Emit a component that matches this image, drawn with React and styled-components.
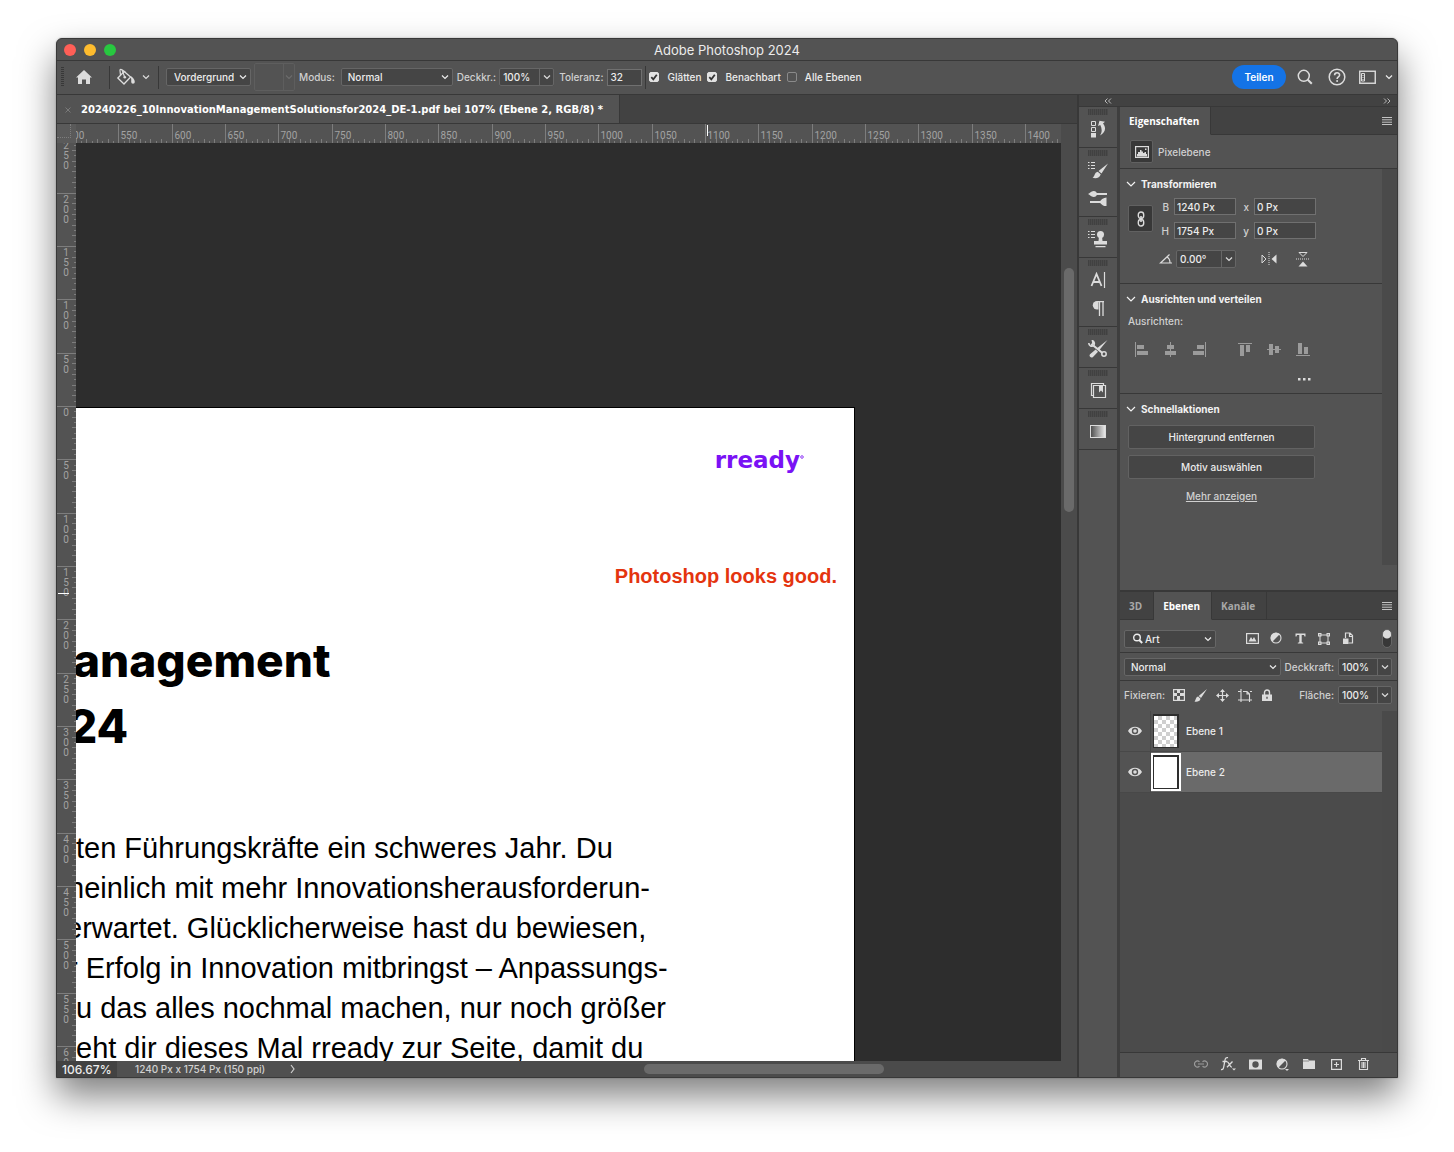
import React from "react";
import styled, { createGlobalStyle, css } from "styled-components";

const ui = `Inter, "Noto Sans", sans-serif`;
const tabFont = `"Open Sans", "Noto Sans", sans-serif`;

const colors = {
  panel: "#535353",
  dark: "#424242",
  field: "#454545",
  line: "#383838",
  edge: "#666666",
  text: "#ececec",
  label: "#d0d0d0",
  icon: "#dcdcdc",
};

const GlobalStyle = createGlobalStyle`
  * {
    box-sizing: border-box;
  }
  body {
    margin: 0;
    background: #ffffff;
  }
  button, input, select {
    font: inherit;
    color: inherit;
    margin: 0;
  }
`;

/* ---------- window ---------- */

const Desktop = styled.div`
  display: flex;
  height: 100vh;
  min-height: 900px;
  padding: 38px 56px 74px;
  font-family: ${ui};
  font-size: 10px;
  font-weight: 500;
  line-height: 16px;
  color: ${colors.text};
`;

const Window = styled.div`
  flex: 1;
  min-width: 0;
  display: flex;
  flex-direction: column;
  overflow: hidden;
  background: ${colors.panel};
  border: 1px solid ${colors.line};
  border-radius: 6px 6px 0 0;
  box-shadow: 0 18px 36px rgba(0, 0, 0, 0.5), 0 0 2px rgba(0, 0, 0, 0.3);
`;

const TitleBar = styled.header`
  display: grid;
  grid-template-columns: 1fr auto 1fr;
  align-items: center;
  height: 22px;
  flex: none;
  padding: 0 7px;
  border-bottom: 1px solid ${colors.line};
`;

const Lights = styled.div`
  display: flex;
  gap: 8px;
`;

const Light = styled.button`
  width: 12px;
  height: 12px;
  padding: 0;
  border: 0;
  border-radius: 50%;
  background: ${(p) => p.$color};
`;

const Title = styled.h1`
  margin: 0;
  font-size: 13px;
  font-weight: 400;
`;

const OptionsBar = styled.div`
  display: flex;
  align-items: center;
  flex: none;
  height: 34px;
  padding: 0 4px 1px;
  border-bottom: 1px solid ${colors.line};
  white-space: nowrap;
`;

const Group = styled.div`
  display: flex;
  align-items: center;
  gap: ${(p) => p.$gap ?? 6}px;
  margin-left: ${(p) => p.$left || 0}px;
`;

const BarGrip = styled.div`
  width: 3px;
  height: 20px;
  background: repeating-linear-gradient(${colors.line} 0 1px, transparent 1px 2px);
`;

const Divider = styled.div`
  width: 1px;
  height: 23px;
  background: ${colors.line};
  margin-left: ${(p) => p.$left || 0}px;
`;

const IconButton = styled.button`
  display: flex;
  align-items: center;
  justify-content: center;
  flex: none;
  padding: 0;
  border: 0;
  background: none;
  width: ${(p) => p.$w || 20}px;
  height: ${(p) => p.$h || 20}px;
  color: ${(p) => (p.$dim ? "#9b9b9b" : colors.icon)};
  svg {
    display: block;
  }
`;

const BoxedButton = styled(IconButton)`
  background: ${colors.line};
  border: 1px solid #616161;
  border-radius: 2px;
`;

const SelectBox = styled.div`
  display: grid;
  align-items: center;
  flex: ${(p) => (p.$w ? "none" : 1)};
  width: ${(p) => (p.$w ? p.$w + "px" : "auto")};
  height: 18px;
  background: ${colors.field};
  border: 1px solid ${colors.edge};
  border-radius: 2px;
  select,
  svg {
    grid-area: 1 / 1;
  }
  select {
    appearance: none;
    width: 100%;
    height: 16px;
    padding: 0 16px 0 ${(p) => p.$indent || 6}px;
    border: 0;
    background: none;
    outline: none;
  }
  svg {
    justify-self: end;
    margin-right: 3px;
    pointer-events: none;
  }
  svg.lead {
    justify-self: start;
    margin-left: 7px;
  }
`;

const EmptySwatch = styled.div`
  display: flex;
  align-items: center;
  justify-content: flex-end;
  width: 41px;
  height: 28px;
  margin: 0 4px 0 3px;
  padding-right: 1px;
  border: 1px solid #5e5e5e;
  border-radius: 2px;
  color: #6c6c6c;
  background: linear-gradient(#5e5e5e, #5e5e5e) 28px 0 / 1px 100% no-repeat;
`;

const Field = styled.input`
  width: ${(p) => p.$w}px;
  height: 17px;
  padding: 0 2px;
  background: ${colors.field};
  border: 1px solid #707070;
  border-radius: 0;
  outline: none;
`;

const Combo = styled.div`
  display: flex;
  flex: none;
  width: ${(p) => p.$w}px;
  height: 18px;
  background: ${colors.field};
  border: 1px solid ${colors.edge};
  border-radius: 2px;
  input {
    flex: 1;
    min-width: 0;
    padding: 0 3px;
    border: 0;
    background: none;
    outline: none;
  }
  button {
    display: flex;
    align-items: center;
    justify-content: center;
    width: 14px;
    padding: 0;
    border: 0;
    border-left: 1px solid ${colors.edge};
    background: none;
    color: ${colors.icon};
  }
`;

const Label = styled.label`
  color: ${colors.label};
  white-space: nowrap;
`;

const Check = styled.label`
  display: flex;
  align-items: center;
  gap: 8px;
  input {
    appearance: none;
    width: 10px;
    height: 10px;
    border: 1px solid #8a8a8a;
    border-radius: 2px;
  }
  span {
    display: grid;
  }
  input,
  svg {
    grid-area: 1 / 1;
  }
  input:checked {
    background: #e2e2e2;
    border-color: #e2e2e2;
  }
  svg {
    display: none;
    pointer-events: none;
    color: #333333;
  }
  input:checked + svg {
    display: block;
  }
`;

const Share = styled.button`
  width: 54px;
  height: 24px;
  margin-right: 7px;
  border: 0;
  border-radius: 12px;
  background: #1473e6;
  color: #ffffff;
  font-weight: 600;
`;

const Push = styled.div`
  flex: 1;
`;

/* ---------- document ---------- */

const Body = styled.div`
  flex: 1;
  min-height: 0;
  display: flex;
`;

const DocumentPane = styled.main`
  flex: 1;
  min-width: 0;
  display: flex;
  flex-direction: column;
`;

const DocTabs = styled.div`
  display: flex;
  flex: none;
  height: 29px;
  background: ${colors.dark};
  border-bottom: 1px solid ${colors.line};
`;

const DocTab = styled.div`
  display: flex;
  align-items: center;
  gap: 10px;
  padding: 1px 16px 0 8px;
  background: ${colors.panel};
  border-right: 1px solid ${colors.line};
  font-family: "DejaVu Sans", sans-serif;
  font-size: 10px;
  font-weight: 700;
  color: #ffffff;
  white-space: nowrap;
`;

const Workspace = styled.div`
  flex: 1;
  min-height: 0;
  display: grid;
  grid-template-columns: 19px minmax(0, 1fr) 16px;
  grid-template-rows: 19px minmax(0, 1fr) 16px;
`;

const Corner = styled.div`
  display: grid;
  grid-template-columns: 14px 1fr;
  grid-template-rows: 14px 1fr;
  background: #5a5a5a;
  div:first-child {
    border-right: 1px dotted #7d7d7d;
    border-bottom: 1px dotted #7d7d7d;
  }
`;

const RulerSvg = styled.svg`
  display: block;
  width: 100%;
  height: 100%;
  overflow: hidden;
  font-family: Roboto, sans-serif;
  font-size: 10px;
  font-weight: 400;
  fill: #a2a2a2;
`;

const Scroll = styled.div`
  display: flex;
  background: #4b4b4b;
  &::before,
  &::after {
    content: "";
    flex: ${(p) => p.$before};
  }
  &::after {
    flex: ${(p) => p.$after};
  }
  div {
    flex: ${(p) => p.$size};
    border-radius: 5px;
    background: #6a6a6a;
  }
`;

const ScrollY = styled(Scroll)`
  grid-row: 1 / 3;
  grid-column: 3;
  flex-direction: column;
  padding: 0 3px;
`;

const ScrollX = styled(Scroll)`
  flex: 1;
  padding: 3px 0;
`;

const Canvas = styled.div`
  min-height: 0;
  overflow: hidden;
  padding-top: 264px;
  background: #2d2d2d;
`;

const Page = styled.article`
  width: 779px;
  height: 1100px;
  padding-top: 40px;
  background: #ffffff;
  border: solid #000000;
  border-width: 1px 1px 0 0;
  font-family: "Liberation Sans", Arial, sans-serif;
  color: #000000;
`;

const Logo = styled.div`
  display: flex;
  justify-content: flex-end;
  align-items: flex-start;
  padding-right: 50px;
  font: 700 23px/24px "DejaVu Sans", sans-serif;
  color: #7a12f5;
  svg {
    margin-top: 7px;
  }
`;

const Remark = styled.p`
  margin: 92px 17px 0 0;
  text-align: right;
  font-size: 20px;
  font-weight: 700;
  line-height: 24px;
  color: #e4340f;
`;

const Heading = styled.h2`
  margin: 39px 0 69px;
  font-family: Inter, sans-serif;
  font-size: 46px;
  font-weight: 800;
  line-height: 66px;
`;

const HeadingLine = styled.div`
  margin-left: ${(p) => -p.$cut}px;
`;

const TextLine = styled.div`
  margin-left: ${(p) => -p.$cut}px;
  font-size: 29px;
  font-weight: 400;
  line-height: 40px;
  white-space: nowrap;
`;

const StatusBar = styled.footer`
  grid-column: 1 / 4;
  display: flex;
  background: ${colors.dark};
`;

const Zoom = styled.div`
  width: 60px;
  padding-left: 5px;
  font-size: 12px;
  line-height: 18px;
  white-space: nowrap;
`;

const DocInfo = styled.div`
  display: flex;
  align-items: center;
  justify-content: space-between;
  width: 183px;
  padding: 0 4px 0 18px;
  background: #505050;
  color: ${colors.label};
  white-space: nowrap;
`;

/* ---------- dock and panels ---------- */

const Side = styled.aside`
  flex: none;
  display: grid;
  grid-template-columns: 38px 277px;
  grid-template-rows: 12px minmax(0, 1fr);
  column-gap: 3px;
  border-left: 2px solid ${colors.line};
  background: #3e3e3e;
`;

const Collapse = styled.div`
  grid-column: 1 / 3;
  display: flex;
  align-items: center;
  justify-content: space-between;
  padding: 0 6px 0 25px;
  background: ${colors.dark};
  border-bottom: 1px solid ${colors.line};
  color: #b8b8b8;
`;

const Dock = styled.nav`
  background: ${colors.panel};
`;

const DockGroup = styled.div`
  display: flex;
  flex-direction: column;
  align-items: center;
  padding: 2px 0 4px;
  border-bottom: 1px solid ${colors.line};
`;

const DockGrip = styled.div`
  width: 20px;
  height: 6px;
  background: repeating-linear-gradient(90deg, #414141 0 1px, #4a4a4a 1px 2px);
`;

const Panels = styled.div`
  display: flex;
  flex-direction: column;
  min-height: 0;
  background: ${colors.panel};
`;

const TabRow = styled.div`
  display: flex;
  flex: none;
  height: 28px;
  background: ${colors.dark};
  font-family: ${tabFont};
  color: #ffffff;
`;

const Tab = styled.button`
  padding: 0 11px 0 9px;
  border: 0;
  border-right: 1px solid ${colors.line};
  border-bottom: 1px solid ${colors.line};
  background: none;
  font-weight: 700;
  color: #a8a8a8;
  ${(p) =>
    p.$active &&
    css`
      background: ${colors.panel};
      border-bottom-color: ${colors.panel};
      color: #ffffff;
    `}
`;

const TabRest = styled.div`
  flex: 1;
  display: flex;
  justify-content: flex-end;
  align-items: center;
  padding-right: 5px;
  border-bottom: 1px solid ${colors.line};
`;

const LayerKind = styled.div`
  display: flex;
  align-items: center;
  gap: 5px;
  height: 34px;
  padding-left: 10px;
  border-bottom: 1px solid ${colors.line};
  color: ${colors.label};
`;

const Properties = styled.section`
  flex: none;
  height: 423px;
  display: grid;
  grid-template-columns: minmax(0, 1fr) 15px;
  border-bottom: 2px solid ${colors.line};
`;

const Track = styled.div`
  margin-bottom: ${(p) => p.$end || 0}px;
  background: #4a4a4a;
`;

const Section = styled.section`
  padding: 7px 0 0 8px;
  height: ${(p) => p.$h}px;
  & + & {
    border-top: 1px solid ${colors.line};
  }
`;

const SectionTitle = styled.h3`
  display: flex;
  align-items: center;
  gap: 5px;
  margin: 0 0 6px -2px;
  font-size: 10px;
  font-weight: 700;
  line-height: 16px;
  color: #f2f2f2;
`;

const Geometry = styled.div`
  display: grid;
  grid-template-columns: 25px 21px 62px 18px 62px;
  grid-template-rows: 17px 17px;
  row-gap: 7px;
  align-items: center;
  label {
    text-align: right;
    padding-right: 5px;
  }
  > button {
    grid-row: 1 / 3;
  }
`;

const AngleRow = styled.div`
  display: flex;
  align-items: center;
  height: 18px;
  margin: 11px 0 0 28px;
`;

const AlignRow = styled.div`
  display: flex;
  gap: 9px;
  margin: 10px 0 0 4px;
  button:nth-child(4) {
    margin-left: 16px;
  }
`;

const More = styled.div`
  display: flex;
  justify-content: flex-end;
  margin: 10px 68px 0 0;
`;

const QuickActions = styled.div`
  display: flex;
  flex-direction: column;
  align-items: center;
  gap: 6px;
  width: 187px;
  padding-top: 2px;
  a {
    margin-top: 3px;
    color: ${colors.label};
  }
`;

const ActionButton = styled.button`
  width: 100%;
  height: 24px;
  padding: 0;
  background: ${colors.field};
  border: 1px solid #626262;
  border-radius: 2px;
`;

const Layers = styled.section`
  flex: 1;
  min-height: 0;
  display: flex;
  flex-direction: column;
`;

const LayerBar = styled.div`
  display: flex;
  align-items: center;
  flex: none;
  height: ${(p) => p.$h}px;
  padding: ${(p) => p.$top || 0}px 5px ${(p) => p.$bottom || 0}px 4px;
  gap: 4px;
  ${(p) =>
    p.$line &&
    css`
      border-bottom: 1px solid ${colors.line};
    `}
`;

const Toggle = styled.input`
  appearance: none;
  width: 10px;
  height: 19px;
  border: 1px solid #666666;
  border-radius: 5px;
  background: radial-gradient(circle at 50% 4px, #dcdcdc 4px, ${colors.line} 5px);
`;

const LayerArea = styled.div`
  flex: 1;
  min-height: 0;
  display: grid;
  grid-template-columns: minmax(0, 1fr) 15px;
  background: #4b4b4b;
`;

const LayerList = styled.ul`
  margin: 0;
  padding: 0;
  list-style: none;
`;

const LayerRow = styled.li`
  display: flex;
  align-items: center;
  height: 41px;
  background: ${colors.panel};
  border-bottom: 1px solid #484848;
`;

const LayerName = styled.div`
  flex: 1;
  display: flex;
  align-items: center;
  gap: 5px;
  height: 100%;
  border-left: 1px solid #484848;
  background: ${(p) => (p.$selected ? "#6a6a6a" : "none")};
`;

const Thumb = styled.div`
  padding: 2px;
  background: ${(p) => (p.$selected ? "#ffffff" : "none")};
  div {
    width: 26px;
    height: 34px;
    border: 2px solid #2e2e2e;
    border-width: 2px 2px 1px 1px;
    background: ${(p) =>
      p.$empty
        ? "repeating-conic-gradient(#cfcfcf 0 25%, #ffffff 0 50%) 0 0 / 8px 8px"
        : "#ffffff"};
  }
`;

const LayerFooter = styled.div`
  display: flex;
  justify-content: flex-end;
  gap: 7px;
  flex: none;
  height: 25px;
  padding: 1px 24px 0 0;
  border-top: 1px solid ${colors.line};
`;

/* ---------- icons ---------- */

const Svg = ({ w = 16, h = 16, children, ...rest }) => (
  <svg
    width={w}
    height={h}
    viewBox={`0 0 ${w} ${h}`}
    fill="none"
    stroke="currentColor"
    aria-hidden="true"
    {...rest}
  >
    {children}
  </svg>
);

const solid = { fill: "currentColor", stroke: "none" };

const Chevron = () => (
  <Svg w={8} h={6}>
    <path d="M1 1.5 4 4.5 7 1.5" strokeWidth="1.2" />
  </Svg>
);

const SectionChevron = () => (
  <Svg w={10} h={8}>
    <path d="M1 2 5 6 9 2" strokeWidth="1.2" />
  </Svg>
);

const MenuIcon = () => (
  <Svg w={10} h={8}>
    <path d="M0 .5h10M0 2.8h10M0 5.2h10M0 7.5h10" stroke="#c4c4c4" />
  </Svg>
);

const CheckMark = () => (
  <Svg w={10} h={10}>
    <path d="M2.3 5.2 4.3 7.3 7.8 2.7" strokeWidth="1.8" />
  </Svg>
);

const HomeIcon = () => (
  <Svg w={18} h={16}>
    <path {...solid} d="M9 1 1 8.4h2V15h4v-4.6h4V15h4V8.4h2Z" />
  </Svg>
);

const BucketIcon = () => (
  <Svg w={20} h={18}>
    <path d="M8.2 3.6 14.6 9 8 16 1.8 10Z" strokeWidth="1.3" />
    <path d="M8.7 9.2 6.2 2.4C5.6.8 3.8 1 4 2.6l.5 4.8M6 1.8l3.4 2.4" strokeWidth="1.2" />
    <circle cx="8.8" cy="9.2" r="1.3" {...solid} />
    <path {...solid} d="M14 8c2.500.7 4.800 3.400 4.800 6a1.800 1.800 0 0 1-3.600 0c0-1.500.3-2.800-.4-4.200Z" />
  </Svg>
);

const SearchIcon = () => (
  <Svg>
    <circle cx="6.800" cy="6.800" r="5.500" strokeWidth="1.500" />
    <path d="m10.800 10.800 4 4" strokeWidth="2" />
  </Svg>
);

const SmallSearch = () => (
  <Svg w={11} h={11} className="lead">
    <circle cx="5" cy="4.500" r="3.300" strokeWidth="1.400" />
    <path d="m7.200 7 3 3" strokeWidth="2" />
  </Svg>
);

const HelpIcon = () => (
  <Svg w={18} h={18}>
    <circle cx="9" cy="9" r="7.800" strokeWidth="1.500" />
    <path d="M6.600 7.200c0-3.200 5-3.200 5-.3 0 2-2.500 1.900-2.500 4" strokeWidth="1.600" />
    <circle cx="9.100" cy="13" r="1" {...solid} />
  </Svg>
);

const WorkspaceIcon = () => (
  <Svg w={17} h={14}>
    <rect x=".75" y="1.250" width="15.500" height="12" strokeWidth="1.400" />
    <path d="M2.500 3.500h3v7.500h-3z" />
    <path d="M3.500 5.500h1M3.500 7.500h1M3.500 9.500h1" />
  </Svg>
);

const HistoryIcon = () => (
  <Svg w={16} h={18}>
    <path d="M1.500 1.500h4v4h-4zM1.500 7.500h4v4h-4z" />
    <path {...solid} d="M1 13h5v4.500H1ZM8 6 9.500.8l5.500 1-2 1.700c3.500 4 2.500 9-3 12C12 12.500 12.300 9 10.300 5Z" />
  </Svg>
);

const ListMark = () => (
  <path d="M0 1.500h1.500M3 1.500h4M0 4.500h1.500M3 4.500h4M0 7.500h1.500M3 7.500h4" strokeWidth="1.200" />
);

const BrushesIcon = () => (
  <Svg w={20} h={18}>
    <ListMark />
    <path {...solid} d="M20 2.500 13.500 12.500 10.500 10ZM9.700 10.700l3 2.500c-.7 3.500-4.700 4.800-8.200 3.500 2.200-.8 1.700-5.300 5.200-6Z" />
  </Svg>
);

const BrushSettingsIcon = () => (
  <Svg w={20} h={16}>
    <path d="M8 4h11M2 12h11" strokeWidth="2" />
    <path {...solid} d="M0 4c2-.5 3-3 5.500-3C8 1 9 2.500 9 4S8 7 5.500 7 2 4.500 0 4ZM11.500 12c2-3 4-4 7-4.500v9c-3-.5-5-1.500-7-4.500Z" />
  </Svg>
);

const StampIcon = () => (
  <Svg w={20} h={18}>
    <ListMark />
    <circle cx="12.500" cy="4.500" r="3.500" {...solid} />
    <path {...solid} d="M11 6h3l.5 5H19v3.500H6V11h4.500ZM7.500 16h10v1.300h-10Z" />
  </Svg>
);

const CharacterIcon = () => (
  <Svg>
    <path d="M1.500 14 6.500 2l5 12M3.200 10h6.600" strokeWidth="1.800" />
    <path d="M14.500 0v16" strokeWidth="1.200" />
  </Svg>
);

const ParagraphIcon = () => (
  <Svg w={14} h={16}>
    <path {...solid} d="M7.500 1H6a4.200 4.200 0 0 0 0 8.400h1.500Z" />
    <path d="M8.500 1v15M12 1v15M7 1.600h6" strokeWidth="1.300" />
  </Svg>
);

const ToolsIcon = () => (
  <Svg w={20} h={18}>
    <path d="M4 4.500 14.500 13" strokeWidth="2" />
    <circle cx="16" cy="14" r="2.200" strokeWidth="1.500" />
    <path d="M.8 3c0 3 3 4 5 2.300 1-1.600.5-4-1.300-4.500L5 3.300 3.200 5" strokeWidth="1.600" />
    <path {...solid} d="M19.500 0 11 10.500 8.700 8.500ZM7.700 9.500 10 11.700 5 17c-2 1.500-4.500-.5-3-2.800Z" />
  </Svg>
);

const LibraryIcon = () => (
  <Svg w={17} h={17}>
    <path d="M3.500 13.500h-2v-12h12v2M3.500 3.500h12v12h-12z" strokeWidth="1.200" />
    <path {...solid} d="M9 4h4v6.500l-2-2-2 2Z" />
  </Svg>
);

const GradientIcon = () => (
  <Svg w={16} h={13}>
    <defs>
      <linearGradient id="swatch">
        <stop offset="0" stopColor="#4a4a4a" />
        <stop offset="1" stopColor="#eeeeee" />
      </linearGradient>
    </defs>
    <rect x=".5" y=".5" width="15" height="12" fill="url(#swatch)" />
  </Svg>
);

const PixelIcon = () => (
  <Svg w={14} h={12}>
    <rect x=".6" y=".6" width="12.800" height="10.800" strokeWidth="1.200" />
    <path {...solid} d="M2 10.500V8h1V6h2V4h1.500v1.500H8V7h1.500V6H11v2h1v2.500ZM10 2.500h1.500V4H10Z" />
  </Svg>
);

const LinkIcon = () => (
  <Svg w={10} h={16}>
    <rect x="2.300" y="1" width="5.400" height="6.500" rx="2.700" strokeWidth="1.400" />
    <rect x="2.300" y="8.500" width="5.400" height="6.500" rx="2.700" strokeWidth="1.400" />
    <path d="M5 5v6" strokeWidth="1.600" />
  </Svg>
);

const AngleIcon = () => (
  <Svg w={14} h={10}>
    <path d="M10.500.5 1.500 9H13M8 3c1.800 1 3 3.500 3 6" strokeWidth="1.200" />
  </Svg>
);

const FlipHIcon = () => (
  <Svg w={16} h={14}>
    <path d="M1 3v8l4-4Z" />
    <path d="M8 0v14" strokeDasharray="1 1" />
    <path {...solid} d="M15.500 2.500v9L10.500 7Z" />
  </Svg>
);

const FlipVIcon = () => (
  <Svg w={14} h={16}>
    <path d="M3 1.500h8L7 5.500Z" />
    <path d="M0 8h14" strokeDasharray="1 1" />
    <path {...solid} d="M2.500 15.500h9L7 10.500Z" />
  </Svg>
);

// bars of the six align buttons: guide line first, then the two blocks
const alignIcons = [
  ["Linke Kanten", "M1 1h1v15H1ZM3 4h7v4H3ZM3 10h11v4H3Z"],
  ["Horizontal zentrieren", "M7 1h1v15H7ZM4 4h7v4H4ZM2 10h11v4H2Z"],
  ["Rechte Kanten", "M13 1h1v15h-1ZM5 4h7v4H5ZM1 10h11v4H1Z"],
  ["Obere Kanten", "M1 2h14v1H1ZM3 4h4v11H3ZM9 4h4v7H9Z"],
  ["Vertikal zentrieren", "M1 8h14v1H1ZM3 3h4v11H3ZM9 5h4v7H9Z"],
  ["Untere Kanten", "M1 14h14v1H1ZM3 2h4v11H3ZM9 6h4v7H9Z"],
];

const PictureIcon = () => (
  <Svg w={13} h={11}>
    <rect x=".6" y=".6" width="11.800" height="9.800" strokeWidth="1.200" />
    <path {...solid} d="M2.500 8.500 5 4l1.500 2.500L8 4l2.500 4.500Z" />
  </Svg>
);

const AdjustIcon = ({ menu }) => (
  <Svg w={13} h={13}>
    <circle cx="6" cy="6" r="5" strokeWidth="1.100" />
    <path {...solid} d="M9.700 2.300A5.200 5.200 0 1 0 2.300 9.700Z" />
    {menu && <path {...solid} d="M9 11h4l-2 2Z" />}
  </Svg>
);

const TypeIcon = () => (
  <Svg w={11} h={11}>
    <path {...solid} d="M.5.500h10v3h-1L9 2H6.700v7.300l1.500.4v.8H2.800v-.8l1.500-.4V2H2l-.5 1.500h-1Z" />
  </Svg>
);

const ShapeIcon = () => (
  <Svg w={12} h={12}>
    <path d="M3 2h6M3 10h6M2 3v6M10 3v6" />
    <path {...solid} d="M0 0h3.500v3.500H0ZM8.500 0H12v3.500H8.500ZM0 8.500h3.500V12H0ZM8.500 8.500H12V12H8.500Z" />
    <path d="M1.200 1.800h1.200M9.600 1.800h1.200M1.200 10.200h1.200M9.600 10.200h1.200" stroke="#535353" />
  </Svg>
);

const SmartIcon = () => (
  <Svg w={12} h={13}>
    <path d="M3.500 6V1h4.500l2.500 2.500V11H6.500M7.500 1v3.500h3" strokeWidth="1.200" />
    <path {...solid} d="M1 6.500h5.500V12H1Z" />
  </Svg>
);

const CheckerIcon = () => (
  <Svg w={12} h={12}>
    <rect x=".6" y=".6" width="10.800" height="10.800" strokeWidth="1.200" />
    <path {...solid} d="M4 1h3v3H4ZM1 4h3v3H1ZM7 4h4v3H7ZM4 7h3v4H4Z" />
  </Svg>
);

const BrushIcon = () => (
  <Svg w={13} h={13}>
    <path {...solid} d="M13 0 7 9 4.700 7ZM4.200 7.500 6.500 9.700C6 12.500 3 13 .5 12.500c1.500-1 1-4.500 3.700-5Z" />
  </Svg>
);

const MoveIcon = () => (
  <Svg w={13} h={13}>
    <path d="M6.500 1v11M1 6.500h11" strokeWidth="1.200" />
    <path {...solid} d="M6.500 0 9 3H4ZM6.500 13 9 10H4ZM0 6.500 3 4v5ZM13 6.500 10 4v5Z" />
  </Svg>
);

const ArtboardIcon = () => (
  <Svg w={14} h={13}>
    <path d="M3 0v13M0 2.500h3M5 2.500h4L11.500 5v8M0 11h14M12 2.500h2M9 2.500V5h2.500" strokeWidth="1.100" />
  </Svg>
);

const LockIcon = () => (
  <Svg w={10} h={12}>
    <path d="M2.500 6V3.500a2.500 2.500 0 0 1 5 0V6" strokeWidth="1.400" />
    <path {...solid} fillRule="evenodd" d="M0 5.500h10V12H0ZM4.300 7.800v2h1.400v-2Z" />
  </Svg>
);

const EyeIcon = () => (
  <Svg w={14} h={10}>
    <path {...solid} fillRule="evenodd" d="M0 5c3-5.600 11-5.600 14 0-3 5.600-11 5.600-14 0Zm7-3.200a3.200 3.200 0 1 0 0 6.400 3.200 3.200 0 0 0 0-6.400Z" />
    <circle cx="7" cy="5" r="1.800" {...solid} />
  </Svg>
);

const ChainIcon = () => (
  <Svg w={14} h={8}>
    <path d="M5.500 6.300A3 3 0 1 1 5.500 1.700M8.500 1.700a3 3 0 1 1 0 4.600M4 4h6" strokeWidth="1.200" />
  </Svg>
);

const FxIcon = () => (
  <Svg w={16} h={16}>
    <path d="M1 13.500c2 .5 2.500-1 3-4l1-5.500c.4-2 1.200-2.800 3-2.300M2.500 5.500h4.500M7 6c2-.8 2.500 5.500 4.800 5M12.500 5.500 7 11.300" strokeWidth="1.300" />
    <path {...solid} d="M12 12.500h4l-2 2Z" />
  </Svg>
);

const MaskIcon = () => (
  <Svg w={13} h={11}>
    <path {...solid} fillRule="evenodd" d="M0 .5h13v10H0ZM6.500 2.300a3.200 3.200 0 1 0 0 6.400 3.200 3.200 0 0 0 0-6.400Z" />
  </Svg>
);

const FolderIcon = () => (
  <Svg w={12} h={10}>
    <path {...solid} d="M0 0h5l1 1.500h6V10H0Z" />
    <path d="M0 2h6" stroke="#777777" strokeWidth=".8" />
  </Svg>
);

const NewIcon = () => (
  <Svg w={11} h={11}>
    <path d="M.6.600h9.800v9.800H.6ZM5.500 3v5M3 5.500h5" strokeWidth="1.200" />
  </Svg>
);

const TrashIcon = () => (
  <Svg w={11} h={12}>
    <path d="M0 2.500h11M3.500 2.500v-2h4v2M1.500 2.500v9h8v-9M4 4v6M5.500 4v6M7 4v6" strokeWidth="1.100" />
  </Svg>
);

/* ---------- rulers ---------- */

const SCALE = 16 / 15;

const range = (from, to, step) => {
  const out = [];
  for (let v = from; v <= to; v += step) out.push(v);
  return out;
};

function TopRuler() {
  const x = (v) => Math.round((v - 500) * SCALE - 11) + 0.5;
  return (
    <RulerSvg>
      {range(500, 1450, 5).map((v) => {
        const len = v % 50 === 0 ? 19 : v % 10 === 0 ? 4 : 2;
        return <path key={v} d={`M${x(v)} 19v-${len}`} stroke="#7d7d7d" />;
      })}
      {range(500, 1400, 50).map((v) => (
        <text key={v} x={x(v) + 2} y="15">
          {v}
        </text>
      ))}
      <path d="M631.500 1v11" stroke="#ffffff" />
    </RulerSvg>
  );
}

function SideRuler() {
  const y = (v) => Math.round(v * SCALE + 263) + 0.5;
  return (
    <RulerSvg>
      {range(-250, 650, 5).map((v) => {
        const len = v % 50 === 0 ? 19 : v % 10 === 0 ? 4 : 2;
        return <path key={v} d={`M19 ${y(v)}h-${len}`} stroke="#7d7d7d" />;
      })}
      {range(-250, 600, 50).map((v) =>
        String(Math.abs(v))
          .split("")
          .map((digit, i) => (
            <text key={v + "-" + i} x="9" y={y(v) + 9 + i * 10} textAnchor="middle">
              {digit}
            </text>
          ))
      )}
      <path d="M1 450.500h11" stroke="#ffffff" />
    </RulerSvg>
  );
}

/* ---------- shared controls ---------- */

const Select = ({ label, value, lead, ...rest }) => (
  <SelectBox {...rest}>
    {lead}
    <select aria-label={label} defaultValue={value}>
      <option>{value}</option>
    </select>
    <Chevron />
  </SelectBox>
);

const ComboField = ({ id, label, value, width }) => (
  <Combo $w={width}>
    <input id={id} aria-label={label} defaultValue={value} />
    <button aria-label={`${label} wählen`}>
      <Chevron />
    </button>
  </Combo>
);

const CheckOption = ({ label, checked }) => (
  <Check>
    <span>
      <input type="checkbox" defaultChecked={checked} />
      <CheckMark />
    </span>
    {label}
  </Check>
);

const dockGroups = [
  [["Protokoll", HistoryIcon]],
  [
    ["Pinsel", BrushesIcon],
    ["Pinseleinstellungen", BrushSettingsIcon],
  ],
  [["Kopierquelle", StampIcon]],
  [
    ["Zeichen", CharacterIcon],
    ["Absatz", ParagraphIcon],
  ],
  [["Werkzeugvorgaben", ToolsIcon]],
  [["Bibliotheken", LibraryIcon]],
  [["Verläufe", GradientIcon]],
];

// cut: how far the line runs out past the left edge of the view
const headingLines = [
  { text: "anagement", cut: 3 },
  { text: "24", cut: 8 },
];

const textLines = [
  { text: "ten Führungskräfte ein schweres Jahr. Du", cut: 0 },
  { text: "heinlich mit mehr Innovationsherausforderun-", cut: 8 },
  { text: "erwartet. Glücklicherweise hast du bewiesen,", cut: 10 },
  { text: "r Erfolg in Innovation mitbringst – Anpassungs-", cut: 8 },
  { text: "u das alles nochmal machen, nur noch größer", cut: 0 },
  { text: "eht dir dieses Mal rready zur Seite, damit du", cut: 0 },
];

function Options() {
  return (
    <OptionsBar>
      <BarGrip />
      <IconButton $w={40} aria-label="Startseite">
        <HomeIcon />
      </IconButton>
      <Divider $left={5} />
      <Group $left={6} $gap={4}>
        <IconButton aria-label="Füllwerkzeug">
          <BucketIcon />
        </IconButton>
        <IconButton $w={12} aria-label="Werkzeugvorgabe wählen">
          <Chevron />
        </IconButton>
      </Group>
      <Divider $left={6} />
      <Group $left={7} $gap={0}>
        <Select label="Füllquelle" value="Vordergrund" $w={85} $indent={7} />
        <EmptySwatch>
          <Chevron />
        </EmptySwatch>
      </Group>
      <Group>
        <Label>Modus:</Label>
        <Select label="Modus" value="Normal" $w={112} />
      </Group>
      <Group $left={4} $gap={3}>
        <Label htmlFor="opacity">Deckkr.:</Label>
        <ComboField id="opacity" label="Deckkraft" value="100%" width={55} />
      </Group>
      <Group $left={5} $gap={4}>
        <Label htmlFor="tolerance">Toleranz:</Label>
        <Field id="tolerance" defaultValue="32" $w={35} />
      </Group>
      <Divider $left={3} />
      <Group $left={3}>
        <CheckOption label="Glätten" checked />
        <CheckOption label="Benachbart" checked />
        <CheckOption label="Alle Ebenen" />
      </Group>
      <Push />
      <Share>Teilen</Share>
      <Group $gap={8}>
        <IconButton $w={24} aria-label="Suchen">
          <SearchIcon />
        </IconButton>
        <IconButton $w={24} aria-label="Hilfe">
          <HelpIcon />
        </IconButton>
        <IconButton aria-label="Arbeitsbereich">
          <WorkspaceIcon />
        </IconButton>
        <Chevron />
      </Group>
    </OptionsBar>
  );
}

function DocumentView() {
  return (
    <DocumentPane>
      <DocTabs>
        <DocTab>
          <Svg w={6} h={6}>
            <path d="m.5.500 5 5m0-5-5 5" stroke="#7a7a7a" />
          </Svg>
          20240226_10InnovationManagementSolutionsfor2024_DE-1.pdf bei 107% (Ebene 2, RGB/8) *
        </DocTab>
      </DocTabs>
      <Workspace>
        <Corner>
          <div />
        </Corner>
        <TopRuler />
        <ScrollY $before={144} $size={244} $after={549}>
          <div />
        </ScrollY>
        <SideRuler />
        <Canvas>
          <Page>
            <Logo>
              rready
              <Svg w={4} h={4}>
                <circle cx="2" cy="2" r="1.300" strokeWidth=".8" />
              </Svg>
            </Logo>
            <Remark>Photoshop looks good.</Remark>
            <Heading>
              {headingLines.map((line) => (
                <HeadingLine key={line.text} $cut={line.cut}>
                  {line.text}
                </HeadingLine>
              ))}
            </Heading>
            {textLines.map((line) => (
              <TextLine key={line.text} $cut={line.cut}>
                {line.text}
              </TextLine>
            ))}
          </Page>
        </Canvas>
        <StatusBar>
          <Zoom>106.67%</Zoom>
          <DocInfo>
            1240 Px x 1754 Px (150 ppi)
            <Svg w={6} h={10}>
              <path d="m1 1 3 4-3 4" strokeWidth="1.200" />
            </Svg>
          </DocInfo>
          <ScrollX $before={344} $size={240} $after={193}>
            <div />
          </ScrollX>
        </StatusBar>
      </Workspace>
    </DocumentPane>
  );
}

function PropertiesPanel() {
  return (
    <>
      <TabRow>
        <Tab $active>Eigenschaften</Tab>
        <TabRest>
          <MenuIcon />
        </TabRest>
      </TabRow>
      <LayerKind>
        <BoxedButton as="span" $w={23} $h={23}>
          <PixelIcon />
        </BoxedButton>
        Pixelebene
      </LayerKind>
      <Properties>
        <div>
          <Section $h={114}>
            <SectionTitle>
              <SectionChevron />
              Transformieren
            </SectionTitle>
            <Geometry>
              <BoxedButton $w={25} $h={27} aria-label="Verknüpfen">
                <LinkIcon />
              </BoxedButton>
              <Label htmlFor="w">B</Label>
              <Field id="w" defaultValue="1240 Px" $w={62} />
              <Label htmlFor="x">x</Label>
              <Field id="x" defaultValue="0 Px" $w={62} />
              <Label htmlFor="h">H</Label>
              <Field id="h" defaultValue="1754 Px" $w={62} />
              <Label htmlFor="y">y</Label>
              <Field id="y" defaultValue="0 Px" $w={62} />
            </Geometry>
            <AngleRow>
              <IconButton aria-label="Winkel">
                <AngleIcon />
              </IconButton>
              <ComboField label="Drehwinkel" value="0.00°" width={60} />
              <Group $left={23} $gap={14}>
                <IconButton aria-label="Horizontal spiegeln">
                  <FlipHIcon />
                </IconButton>
                <IconButton aria-label="Vertikal spiegeln">
                  <FlipVIcon />
                </IconButton>
              </Group>
            </AngleRow>
          </Section>
          <Section $h={110}>
            <SectionTitle>
              <SectionChevron />
              Ausrichten und verteilen
            </SectionTitle>
            <Label as="div">Ausrichten:</Label>
            <AlignRow>
              {alignIcons.map(([name, d]) => (
                <IconButton key={name} $dim aria-label={name}>
                  <Svg>
                    <path {...solid} d={d} />
                  </Svg>
                </IconButton>
              ))}
            </AlignRow>
            <More>
              <IconButton aria-label="Weitere Optionen">
                <Svg w={14} h={4}>
                  <path {...solid} d="M1 1h2.500v2.500H1ZM6 1h2.500v2.500H6ZM11 1h2.500v2.500H11Z" />
                </Svg>
              </IconButton>
            </More>
          </Section>
          <Section>
            <SectionTitle>
              <SectionChevron />
              Schnellaktionen
            </SectionTitle>
            <QuickActions>
              <ActionButton>Hintergrund entfernen</ActionButton>
              <ActionButton>Motiv auswählen</ActionButton>
              <a href="#more">Mehr anzeigen</a>
            </QuickActions>
          </Section>
        </div>
        <Track $end={25} />
      </Properties>
    </>
  );
}

function LayersPanel() {
  return (
    <Layers>
      <TabRow>
        <Tab>3D</Tab>
        <Tab $active>Ebenen</Tab>
        <Tab>Kanäle</Tab>
        <TabRest>
          <MenuIcon />
        </TabRest>
      </TabRow>
      <LayerBar $h={33} $top={5} $line>
        <Select label="Filter" value="Art" $w={92} $indent={20} lead={<SmallSearch />} />
        <Group $left={22} $gap={4}>
          {[PictureIcon, AdjustIcon, TypeIcon, ShapeIcon, SmartIcon].map((Icon, i) => (
            <IconButton key={i} aria-label={`Filter ${i + 1}`}>
              <Icon />
            </IconButton>
          ))}
        </Group>
        <Push />
        <Toggle type="checkbox" aria-label="Filter aktiv" />
      </LayerBar>
      <LayerBar $h={28} $line>
        <Select label="Mischmodus" value="Normal" />
        <Label htmlFor="layer-opacity">Deckkraft:</Label>
        <ComboField id="layer-opacity" label="Deckkraft" value="100%" width={54} />
      </LayerBar>
      <LayerBar $h={30} $bottom={2}>
        <Label as="span">Fixieren:</Label>
        <Group $gap={2}>
          {[CheckerIcon, BrushIcon, MoveIcon, ArtboardIcon, LockIcon].map((Icon, i) => (
            <IconButton key={i} aria-label={`Fixieren ${i + 1}`}>
              <Icon />
            </IconButton>
          ))}
        </Group>
        <Push />
        <Label htmlFor="fill">Fläche:</Label>
        <ComboField id="fill" label="Fläche" value="100%" width={54} />
      </LayerBar>
      <LayerArea>
        <LayerList>
          {["Ebene 1", "Ebene 2"].map((name, i) => (
            <LayerRow key={name}>
              <IconButton $w={30} aria-label={`${name} einblenden`}>
                <EyeIcon />
              </IconButton>
              <LayerName $selected={i === 1}>
                <Thumb $selected={i === 1} $empty={i === 0}>
                  <div />
                </Thumb>
                {name}
              </LayerName>
            </LayerRow>
          ))}
        </LayerList>
        <Track />
      </LayerArea>
      <LayerFooter>
        <IconButton $dim aria-label="Ebenen verknüpfen">
          <ChainIcon />
        </IconButton>
        <IconButton aria-label="Ebenenstil">
          <FxIcon />
        </IconButton>
        <IconButton aria-label="Maske">
          <MaskIcon />
        </IconButton>
        <IconButton aria-label="Einstellungsebene">
          <AdjustIcon menu />
        </IconButton>
        <IconButton aria-label="Gruppe">
          <FolderIcon />
        </IconButton>
        <IconButton aria-label="Neue Ebene">
          <NewIcon />
        </IconButton>
        <IconButton aria-label="Löschen">
          <TrashIcon />
        </IconButton>
      </LayerFooter>
    </Layers>
  );
}

export default function App() {
  return (
    <>
      <GlobalStyle />
      <Desktop>
        <Window>
          <TitleBar>
            <Lights>
              <Light $color="#ff5f57" aria-label="Schließen" />
              <Light $color="#febc2e" aria-label="Minimieren" />
              <Light $color="#28c840" aria-label="Vollbild" />
            </Lights>
            <Title>Adobe Photoshop 2024</Title>
          </TitleBar>
          <Options />
          <Body>
            <DocumentView />
            <Side>
              <Collapse>
                <Svg w={8} h={6}>
                  <path d="M3.500.500 1 3l2.500 2.500M7 .5 4.500 3 7 5.500" />
                </Svg>
                <Svg w={8} h={6}>
                  <path d="M1 .5 3.500 3 1 5.500M4.500.500 7 3 4.500 5.500" />
                </Svg>
              </Collapse>
              <Dock>
                {dockGroups.map((group) => (
                  <DockGroup key={group[0][0]}>
                    <DockGrip />
                    {group.map(([name, Icon]) => (
                      <IconButton key={name} $w={28} $h={28} aria-label={name}>
                        <Icon />
                      </IconButton>
                    ))}
                  </DockGroup>
                ))}
              </Dock>
              <Panels>
                <PropertiesPanel />
                <LayersPanel />
              </Panels>
            </Side>
          </Body>
        </Window>
      </Desktop>
    </>
  );
}
